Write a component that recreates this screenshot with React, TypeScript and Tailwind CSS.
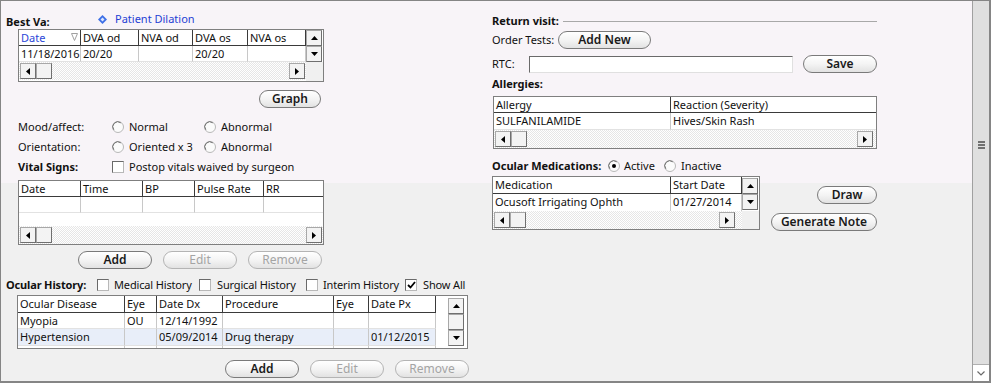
import React from 'react';

type Dir = 'up' | 'down' | 'left' | 'right';

function Tri({ dir }: { dir: Dir }) {
  if (dir === 'up')
    return (
      <svg width="7" height="4" viewBox="0 0 7 4">
        <polygon points="0,4 3.5,0 7,4" fill="#000" />
      </svg>
    );
  if (dir === 'down')
    return (
      <svg width="7" height="4" viewBox="0 0 7 4">
        <polygon points="0,0 7,0 3.5,4" fill="#000" />
      </svg>
    );
  if (dir === 'left')
    return (
      <svg width="4" height="7" viewBox="0 0 4 7">
        <polygon points="4,0 4,7 0,3.5" fill="#000" />
      </svg>
    );
  return (
    <svg width="4" height="7" viewBox="0 0 4 7">
      <polygon points="0,0 0,7 4,3.5" fill="#000" />
    </svg>
  );
}

function ArrowBox({ dir }: { dir: Dir }) {
  return (
    <div className="w-[16px] h-[16px] shrink-0 flex items-center justify-center bg-[#f3f3f3] border border-[#a8a8a8] border-r-[#6f6f6f] border-b-[#6f6f6f]">
      <Tri dir={dir} />
    </div>
  );
}

function Thumb() {
  return <div className="w-[16px] h-[16px] shrink-0 bg-[#f3f3f3] border border-[#a8a8a8] border-r-[#6f6f6f] border-b-[#6f6f6f]" />;
}

function HScroll({ className = '' }: { className?: string }) {
  return (
    <div
      className={`flex h-[18px] shrink-0 items-center px-[1px] bg-[repeating-conic-gradient(#ffffff_0%_25%,#e6e6e6_0%_50%)] bg-[length:2px_2px] ${className}`}
    >
      <ArrowBox dir="left" />
      <Thumb />
      <div className="flex-1" />
      <ArrowBox dir="right" />
    </div>
  );
}

function Pill({
  children,
  className = '',
  disabled = false,
}: {
  children: React.ReactNode;
  className?: string;
  disabled?: boolean;
}) {
  return (
    <div
      className={`h-[18px] shrink-0 flex items-center justify-center rounded-full border text-[12px] leading-none bg-[linear-gradient(#ffffff,#f4f4f4_50%,#e2e2e2)] ${
        disabled ? 'border-[#b4b4b4] text-[#a4a4a4]' : 'border-[#7a7a7a] text-[#1a1a1a] font-semibold'
      } ${className}`}
    >
      {children}
    </div>
  );
}

function Radio({ checked = false }: { checked?: boolean }) {
  return (
    <svg width="12" height="12" viewBox="0 0 12 12" className="shrink-0">
      <circle cx="6" cy="6" r="5.5" fill="#fbfbfb" stroke="#b8b8b8" />
      <path d="M1.8 8.8 A5 5 0 0 1 8.8 1.8" stroke="#6e6e6e" fill="none" />
      {checked && <circle cx="6" cy="6" r="2" fill="#000" />}
    </svg>
  );
}

function Check({ checked = false }: { checked?: boolean }) {
  return (
    <div className="w-[12px] h-[12px] shrink-0 bg-white border border-[#6a6a6a] border-r-[#b8b8b8] border-b-[#b8b8b8] flex items-center justify-center">
      {checked && (
        <svg width="9" height="8" viewBox="0 0 9 8">
          <path d="M1 4 L3.5 6.5 L8 1" stroke="#000" strokeWidth="1.8" fill="none" />
        </svg>
      )}
    </div>
  );
}

const H = 'border-r border-b border-[#3a3a3a] px-[2px] leading-[15px] whitespace-nowrap overflow-hidden';
const D = 'border-r border-b border-r-[#c8c8c8] border-b-[#e2e2e2] px-[2px] leading-[15px] whitespace-nowrap overflow-hidden';

function SortIcon() {
  return (
    <svg width="7" height="8" viewBox="0 0 7 8" className="mt-[3px]">
      <polygon points="0.5,0.5 6.5,0.5 3.5,7.5" fill="none" stroke="#a0a0a0" />
    </svg>
  );
}

function Diamond() {
  return (
    <svg width="9" height="9" viewBox="0 0 9 9" className="shrink-0">
      <polygon points="4.5,0 9,4.5 4.5,9 0,4.5" fill="#3d6fe6" />
      <polygon points="4.5,2.5 6.5,4.5 4.5,6.5 2.5,4.5" fill="#dbe6ff" />
    </svg>
  );
}

function BestVaTable() {
  return (
    <div className="ml-[12px] w-[306px] h-[53px] shrink-0 border border-[#7f7f7f] bg-white flex flex-col overflow-hidden">
      <div className="flex h-[32px]">
        <div className="w-[287px]">
          <div className="grid grid-cols-[62px_58px_54px_55px_58px] h-[16px]">
            <div className={`${H} flex justify-between text-[#2a46d8]`}>
              <span>Date</span>
              <SortIcon />
            </div>
            <div className={H}>DVA od</div>
            <div className={H}>NVA od</div>
            <div className={H}>DVA os</div>
            <div className={H}>NVA os</div>
          </div>
          <div className="grid grid-cols-[62px_58px_54px_55px_58px] h-[16px]">
            <div className={D}>11/18/2016</div>
            <div className={D}>20/20</div>
            <div className={D}></div>
            <div className={D}>20/20</div>
            <div className={D}></div>
          </div>
        </div>
        <div className="w-[17px] flex flex-col">
          <ArrowBox dir="up" />
          <ArrowBox dir="down" />
        </div>
      </div>
      <div className="flex h-[19px]">
        <HScroll className="w-[287px]" />
        <div className="flex-1 bg-[#f0f0f0]" />
      </div>
    </div>
  );
}

function VitalTable() {
  return (
    <div className="ml-[12px] mt-[6px] w-[306px] h-[65px] shrink-0 border border-[#7f7f7f] bg-white flex flex-col overflow-hidden">
      <div className="grid grid-cols-[62px_62px_52px_69px_59px] h-[16px]">
        <div className={H}>Date</div>
        <div className={H}>Time</div>
        <div className={H}>BP</div>
        <div className={H}>Pulse Rate</div>
        <div className="border-b border-[#3a3a3a] px-[2px] leading-[15px]">RR</div>
      </div>
      <div className="grid grid-cols-[62px_62px_52px_69px_59px] h-[16px]">
        <div className={D}></div>
        <div className={D}></div>
        <div className={D}></div>
        <div className={D}></div>
        <div className="border-b border-[#e2e2e2]"></div>
      </div>
      <div className="flex-1" />
      <HScroll className="w-full" />
    </div>
  );
}

function OcularTable() {
  return (
    <div className="ml-[11px] mt-[3px] w-[451px] h-[54px] shrink-0 border border-[#7f7f7f] bg-white flex overflow-hidden">
      <div className="w-[418px] flex flex-col">
        <div className="grid grid-cols-[107px_32px_66px_111px_35px_67px] h-[17px]">
          <div className={H}>Ocular Disease</div>
          <div className={H}>Eye</div>
          <div className={H}>Date Dx</div>
          <div className={H}>Procedure</div>
          <div className={H}>Eye</div>
          <div className={H}>Date Px</div>
        </div>
        <div className="grid grid-cols-[107px_32px_66px_111px_35px_67px] h-[16px]">
          <div className={D}>Myopia</div>
          <div className={D}>OU</div>
          <div className={D}>12/14/1992</div>
          <div className={D}></div>
          <div className={D}></div>
          <div className={D}></div>
        </div>
        <div className="grid grid-cols-[107px_32px_66px_111px_35px_67px] h-[17px] bg-[#e8eef9]">
          <div className={D}>Hypertension</div>
          <div className={D}></div>
          <div className={D}>05/09/2014</div>
          <div className={D}>Drug therapy</div>
          <div className={D}></div>
          <div className={D}>01/12/2015</div>
        </div>
        <div className="grid grid-cols-[107px_32px_66px_111px_35px_67px] flex-1">
          <div className="border-r border-[#c8c8c8]"></div>
          <div className="border-r border-[#c8c8c8]"></div>
          <div className="border-r border-[#c8c8c8]"></div>
          <div className="border-r border-[#c8c8c8]"></div>
          <div className="border-r border-[#c8c8c8]"></div>
          <div className="border-r border-[#c8c8c8]"></div>
        </div>
      </div>
      <div className="flex-1" />
      <div className="w-[17px] mr-[2px] pt-[2px] flex flex-col">
        <ArrowBox dir="up" />
        <Thumb />
        <ArrowBox dir="down" />
      </div>
    </div>
  );
}

function AllergyTable() {
  return (
    <div className="ml-[1px] mt-[5px] w-[384px] h-[53px] shrink-0 border border-[#7f7f7f] bg-white flex flex-col overflow-hidden">
      <div className="grid grid-cols-[177px_1fr] h-[16px]">
        <div className={H}>Allergy</div>
        <div className="border-b border-[#3a3a3a] px-[2px] leading-[15px]">Reaction (Severity)</div>
      </div>
      <div className="grid grid-cols-[177px_1fr] h-[17px]">
        <div className={D}>SULFANILAMIDE</div>
        <div className="border-b border-[#e2e2e2] px-[2px] leading-[15px]">Hives/Skin Rash</div>
      </div>
      <HScroll className="w-full pr-[3px]" />
    </div>
  );
}

function MedsTable() {
  return (
    <div className="w-[268px] h-[54px] shrink-0 border border-[#7f7f7f] bg-white flex flex-col overflow-hidden">
      <div className="flex h-[34px]">
        <div className="w-[249px] flex flex-col overflow-hidden">
          <div className="grid grid-cols-[178px_71px] h-[17px] shrink-0">
            <div className={H}>Medication</div>
            <div className={H}>Start Date</div>
          </div>
          <div className="grid grid-cols-[178px_71px] h-[17px] shrink-0 overflow-hidden">
            <div className="border-r border-[#c8c8c8] px-[2px] leading-[14px] pt-[1px] w-[178px]">
              Ocusoft Irrigating Ophth Solution
            </div>
            <div className="border-r border-[#c8c8c8] px-[2px] leading-[14px] pt-[1px]">01/27/2014</div>
          </div>
        </div>
        <div className="w-[17px] flex flex-col pt-[1px]">
          <ArrowBox dir="up" />
          <ArrowBox dir="down" />
        </div>
      </div>
      <div className="flex h-[18px]">
        <HScroll className="w-[249px] pr-[7px]" />
        <div className="flex-1 bg-[#f0f0f0]" />
      </div>
    </div>
  );
}

function LeftCol() {
  return (
    <div className="w-[491px] shrink-0 pl-[5px] flex flex-col">
      <div className="mt-[10px] h-[18px] flex">
        <div className="w-[92px] self-end font-bold leading-[14px]">Best Va:</div>
        <div className="self-start flex items-center h-[14px] mt-[1px]">
          <Diamond />
          <span className="ml-[8px] text-[#1f3fd4] leading-[14px]">Patient Dilation</span>
        </div>
      </div>
      <BestVaTable />
      <div className="mt-[8px] h-[18px] flex w-[315px] justify-end">
        <Pill className="w-[62px]">Graph</Pill>
      </div>
      <div className="mt-[12px] h-[14px] flex items-center pl-[12px] leading-[14px]">
        <div className="w-[94px]">Mood/affect:</div>
        <div className="w-[92px] flex items-center">
          <Radio />
          <span className="ml-[5px]">Normal</span>
        </div>
        <div className="flex items-center">
          <Radio />
          <span className="ml-[5px]">Abnormal</span>
        </div>
      </div>
      <div className="mt-[6px] h-[14px] flex items-center pl-[12px] leading-[14px]">
        <div className="w-[94px]">Orientation:</div>
        <div className="w-[92px] flex items-center">
          <Radio />
          <span className="ml-[5px]">Oriented x 3</span>
        </div>
        <div className="flex items-center">
          <Radio />
          <span className="ml-[5px]">Abnormal</span>
        </div>
      </div>
      <div className="mt-[6px] h-[14px] flex items-center pl-[12px] leading-[14px]">
        <div className="w-[94px] font-bold">Vital Signs:</div>
        <Check />
        <span className="ml-[5px]">Postop vitals waived by surgeon</span>
      </div>
      <VitalTable />
      <div className="mt-[6px] h-[18px] flex pl-[72px] gap-[11px]">
        <Pill className="w-[74px]">Add</Pill>
        <Pill className="w-[74px]" disabled>
          Edit
        </Pill>
        <Pill className="w-[74px]" disabled>
          Remove
        </Pill>
      </div>
      <div className="mt-[9px] h-[14px] flex items-center leading-[14px] tracking-[-0.15px]">
        <div className="w-[91px] font-bold">Ocular History:</div>
        <div className="w-[102px] flex items-center">
          <Check />
          <span className="ml-[5px]">Medical History</span>
        </div>
        <div className="w-[107px] flex items-center">
          <Check />
          <span className="ml-[6px]">Surgical History</span>
        </div>
        <div className="w-[99px] flex items-center">
          <Check />
          <span className="ml-[5px]">Interim History</span>
        </div>
        <div className="flex items-center">
          <Check checked />
          <span className="ml-[6px]">Show All</span>
        </div>
      </div>
      <OcularTable />
      <div className="mt-[11px] h-[18px] flex pl-[219px] gap-[11px]">
        <Pill className="w-[74px]">Add</Pill>
        <Pill className="w-[74px]" disabled>
          Edit
        </Pill>
        <Pill className="w-[74px]" disabled>
          Remove
        </Pill>
      </div>
    </div>
  );
}

function RightCol() {
  return (
    <div className="w-[385px] shrink-0 flex flex-col">
      <div className="mt-[13px] h-[14px] flex items-center leading-[14px]">
        <span className="font-bold">Return visit:</span>
        <div className="flex-1 ml-[4px] h-px bg-[#a8a8a8]" />
      </div>
      <div className="mt-[3px] h-[18px] flex items-center leading-[14px]">
        <div className="w-[66px]">Order Tests:</div>
        <Pill className="w-[93px]">Add New</Pill>
      </div>
      <div className="mt-[6px] h-[18px] flex items-center leading-[14px]">
        <div className="w-[37px]">RTC:</div>
        <div className="w-[264px] h-[17px] bg-white border border-[#6a6a6a] border-r-[#e0e0e0] border-b-[#e0e0e0]" />
        <Pill className="w-[74px] ml-[10px]">Save</Pill>
      </div>
      <div className="mt-[4px] h-[14px] font-bold leading-[14px]">Allergies:</div>
      <AllergyTable />
      <div className="mt-[10px] h-[14px] flex items-center leading-[14px]">
        <div className="w-[116px] font-bold">Ocular Medications:</div>
        <div className="w-[56px] flex items-center">
          <Radio checked />
          <span className="ml-[4px]">Active</span>
        </div>
        <div className="flex items-center">
          <Radio />
          <span className="ml-[5px]">Inactive</span>
        </div>
      </div>
      <div className="mt-[3px] flex">
        <MedsTable />
        <div className="ml-auto flex flex-col items-end">
          <Pill className="w-[60px] mt-[10px]">Draw</Pill>
          <Pill className="w-[106px] mt-[9px]">Generate Note</Pill>
        </div>
      </div>
    </div>
  );
}

function Scrollbar() {
  return (
    <div className="w-[17px] shrink-0 flex flex-col border-l border-[#a0a0a0] bg-[#dfdfdf]">
      <div className="flex-1 flex flex-col items-center pt-[140px]">
        <div className="w-[7px] h-[2px] bg-[#707070]" />
        <div className="w-[7px] h-[2px] bg-[#707070] mt-[1px]" />
        <div className="w-[7px] h-[2px] bg-[#707070] mt-[1px]" />
      </div>
      <div className="h-[17px] bg-white border-t border-[#b0b0b0] flex items-center justify-center">
        <svg width="8" height="5" viewBox="0 0 8 5">
          <path d="M0.5 0.5 L4 4 L7.5 0.5" stroke="#6a6a6a" strokeWidth="1.2" fill="none" />
        </svg>
      </div>
    </div>
  );
}

export default function App() {
  return (
    <div className="w-[991px] h-[383px] flex border-t border-l border-b-2 border-r-2 border-[#858585] bg-[linear-gradient(to_bottom,#f8f4f8_182px,#f0f0f0_182px)] text-[11px] text-[#111] font-['Noto_Sans',sans-serif] overflow-hidden">
      <div className="w-[971px] shrink-0 flex">
        <LeftCol />
        <RightCol />
      </div>
      <Scrollbar />
    </div>
  );
}
